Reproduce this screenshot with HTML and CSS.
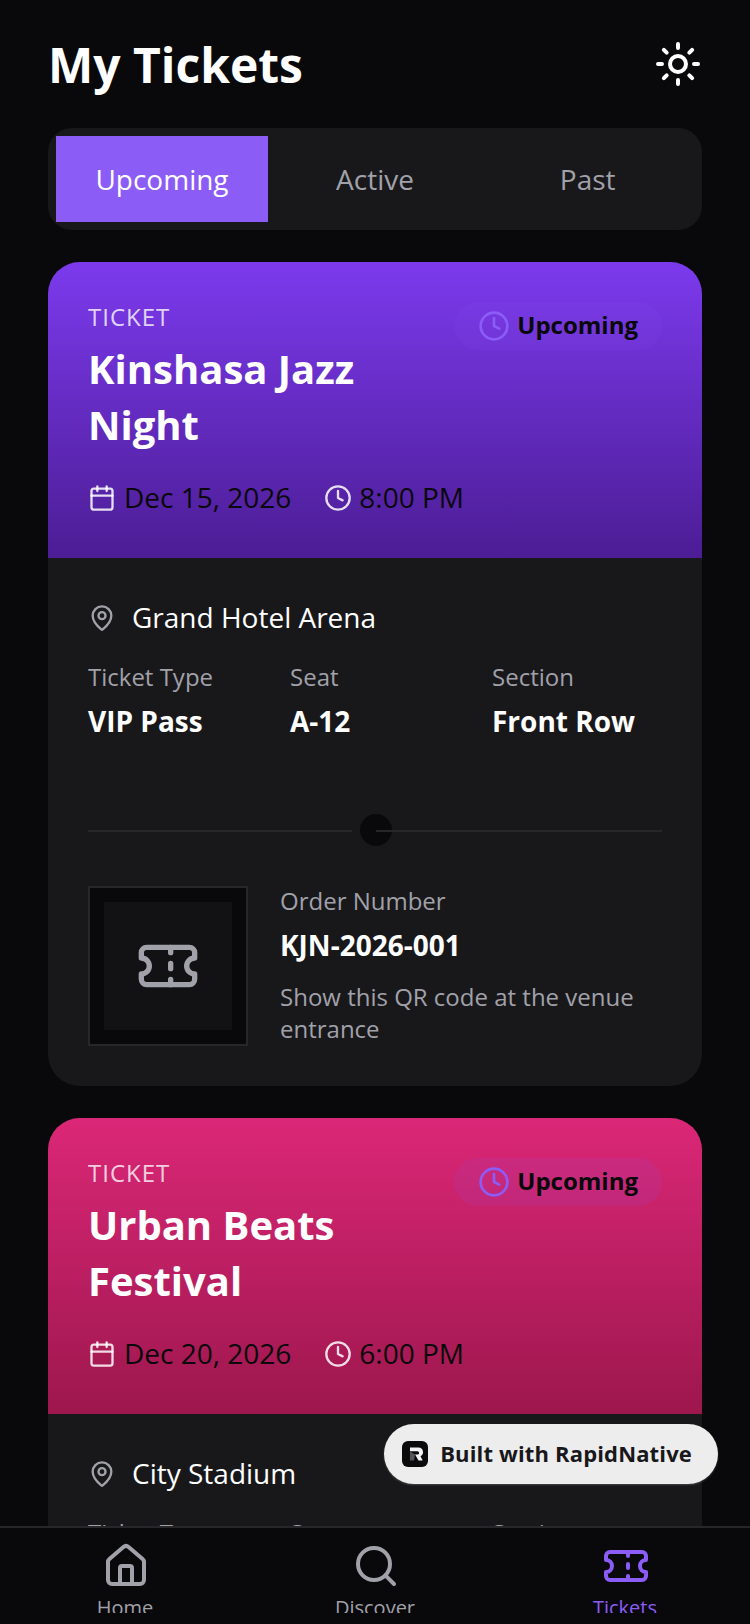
FILE: index.html
```html
<!DOCTYPE html>
<html>
  <head>
    <title>My Tickets</title>
    <link rel="stylesheet" href="styles.css">
  </head>
  <body>
    <svg class="defs" width="0" height="0">
      <symbol id="i-sun" viewBox="0 0 24 24"><circle cx="12" cy="12" r="4"/><path d="M12 2v2M12 20v2M4.93 4.93l1.41 1.41M17.66 17.66l1.41 1.41M2 12h2M20 12h2M6.34 17.66l-1.41 1.41M19.07 4.93l-1.41 1.41"/></symbol>
      <symbol id="i-clock" viewBox="0 0 24 24"><circle cx="12" cy="12" r="10"/><path d="M12 6v6l4 2"/></symbol>
      <symbol id="i-calendar" viewBox="0 0 24 24"><path d="M8 2v4M16 2v4M3 10h18"/><rect x="3" y="4" width="18" height="18" rx="2"/></symbol>
      <symbol id="i-pin" viewBox="0 0 24 24"><path d="M20 10c0 4.993-5.539 10.193-7.399 11.799a1 1 0 0 1-1.202 0C9.539 20.193 4 14.993 4 10a8 8 0 0 1 16 0"/><circle cx="12" cy="10" r="3"/></symbol>
      <symbol id="i-ticket" viewBox="0 0 24 24"><path d="M2 9a3 3 0 0 1 0 6v2a2 2 0 0 0 2 2h16a2 2 0 0 0 2-2v-2a3 3 0 0 1 0-6V7a2 2 0 0 0-2-2H4a2 2 0 0 0-2 2Z"/><path d="M13 5v2M13 17v2M13 11v2"/></symbol>
      <symbol id="i-home" viewBox="0 0 24 24"><path d="M15 21v-8a1 1 0 0 0-1-1h-4a1 1 0 0 0-1 1v8"/><path d="M3 10a2 2 0 0 1 .709-1.528l7-5.999a2 2 0 0 1 2.582 0l7 5.999A2 2 0 0 1 21 10v9a2 2 0 0 1-2 2H5a2 2 0 0 1-2-2z"/></symbol>
      <symbol id="i-search" viewBox="0 0 24 24"><circle cx="11" cy="11" r="8"/><path d="M21 21l-4.3-4.3"/></symbol>
    </svg>

    <div class="screen">
      <div class="content">
        <div class="header">
          <h1 class="page-title">My Tickets</h1>
          <svg class="icon icon-sun"><use href="#i-sun"/></svg>
        </div>

        <div class="tabs">
          <div class="tab tab-active">Upcoming</div>
          <div class="tab">Active</div>
          <div class="tab">Past</div>
        </div>

        <div class="card">
          <div class="card-head head-purple">
            <div class="head-top">
              <div class="head-text">
                <div class="eyebrow">TICKET</div>
                <div class="event-name">Kinshasa Jazz Night</div>
              </div>
              <div class="badge">
                <svg class="icon icon-badge"><use href="#i-clock"/></svg>
                <span>Upcoming</span>
              </div>
            </div>
            <div class="meta">
              <div class="meta-item">
                <svg class="icon icon-meta"><use href="#i-calendar"/></svg>
                <span>Dec 15, 2026</span>
              </div>
              <div class="meta-item">
                <svg class="icon icon-meta"><use href="#i-clock"/></svg>
                <span>8:00 PM</span>
              </div>
            </div>
          </div>
          <div class="card-body">
            <div class="venue">
              <svg class="icon icon-pin"><use href="#i-pin"/></svg>
              <span>Grand Hotel Arena</span>
            </div>
            <div class="details">
              <div>
                <div class="label">Ticket Type</div>
                <div class="value">VIP Pass</div>
              </div>
              <div>
                <div class="label">Seat</div>
                <div class="value">A-12</div>
              </div>
              <div>
                <div class="label">Section</div>
                <div class="value">Front Row</div>
              </div>
            </div>
            <div class="divider">
              <div class="line line-left"></div>
              <div class="hole"></div>
              <div class="line line-right"></div>
            </div>
            <div class="order">
              <div class="qr">
                <div class="qr-inner">
                  <svg class="icon icon-qr"><use href="#i-ticket"/></svg>
                </div>
              </div>
              <div class="order-info">
                <div class="label">Order Number</div>
                <div class="value">KJN-2026-001</div>
                <div class="note">Show this QR code at the venue entrance</div>
              </div>
            </div>
          </div>
        </div>

        <div class="card">
          <div class="card-head head-pink">
            <div class="head-top">
              <div class="head-text">
                <div class="eyebrow">TICKET</div>
                <div class="event-name">Urban Beats Festival</div>
              </div>
              <div class="badge">
                <svg class="icon icon-badge"><use href="#i-clock"/></svg>
                <span>Upcoming</span>
              </div>
            </div>
            <div class="meta">
              <div class="meta-item">
                <svg class="icon icon-meta"><use href="#i-calendar"/></svg>
                <span>Dec 20, 2026</span>
              </div>
              <div class="meta-item">
                <svg class="icon icon-meta"><use href="#i-clock"/></svg>
                <span>6:00 PM</span>
              </div>
            </div>
          </div>
          <div class="card-body">
            <div class="venue">
              <svg class="icon icon-pin"><use href="#i-pin"/></svg>
              <span>City Stadium</span>
            </div>
            <div class="details">
              <div class="label">Ticket Type</div>
              <div class="label">Seat</div>
              <div class="label">Section</div>
            </div>
          </div>
        </div>
      </div>

      <div class="tabbar">
        <div class="tabbar-row">
          <div class="nav-item">
            <svg class="icon icon-nav icon-shift"><use href="#i-home"/></svg>
            <span>Home</span>
          </div>
          <div class="nav-item">
            <svg class="icon icon-nav icon-shift"><use href="#i-search"/></svg>
            <span>Discover</span>
          </div>
          <div class="nav-item nav-active">
            <svg class="icon icon-nav icon-shift"><use href="#i-ticket"/></svg>
            <span>Tickets</span>
          </div>
        </div>
      </div>

      <div class="built">
        <svg class="built-logo" viewBox="0 0 26 26">
          <rect width="26" height="26" rx="6" fill="#0b0b0d"/>
          <path d="M8 6.5h8.5a4.6 4.6 0 0 1 2 8.7l2.2 4.3h-4.2l-3.4-6h2.4a1.5 1.5 0 0 0 0-3.2H8z" fill="#f4f4f5"/>
          <path d="M8 10.5l5 3-1 6H8z" fill="#55555a"/>
        </svg>
        <span>Built with RapidNative</span>
      </div>
    </div>
  </body>
</html>
```

FILE: styles.css
```css
* {
  box-sizing: border-box;
}

body {
  margin: 0;
  background: #09090b;
  font-family: "Open Sans", "Noto Sans", sans-serif;
  color: #fff;
}

.defs {
  position: absolute;
}

.screen {
  position: relative;
  display: flex;
  flex-direction: column;
  width: 750px;
  height: 1624px;
  overflow: hidden;
}

.content {
  flex: 1;
  min-height: 0;
  overflow: hidden;
  padding: 32px 48px 0;
}

.icon {
  display: block;
  flex-shrink: 0;
  fill: none;
  stroke: currentColor;
  stroke-width: 2;
  stroke-linecap: round;
  stroke-linejoin: round;
}

.header {
  display: flex;
  justify-content: space-between;
  align-items: center;
  height: 64px;
}

.page-title {
  margin: 0;
  padding-top: 2px;
  font-size: 48px;
  line-height: 62px;
  font-weight: 700;
}

.icon-sun {
  width: 48px;
  height: 48px;
  color: #fff;
}

.tabs {
  display: flex;
  margin-top: 32px;
  padding: 8px;
  background: #18181b;
  border-radius: 24px;
}

.tab {
  flex: 1;
  height: 86px;
  display: flex;
  align-items: center;
  justify-content: center;
  font-size: 28px;
  color: #a1a1aa;
}

.tab-active {
  flex: none;
  width: 212px;
  margin-right: 0.67px;
  background: #8b5cf6;
  color: #fff;
}

.card {
  margin-top: 32px;
  border-radius: 32px;
  overflow: hidden;
  background: #18181b;
}

.card-head {
  padding: 40px;
}

.head-purple {
  background: linear-gradient(180deg, #7c3aed, #4c1d95);
}

.head-pink {
  background: linear-gradient(180deg, #db2777, #9d174d);
}

.head-top {
  display: flex;
  justify-content: space-between;
  align-items: flex-start;
}

.head-text {
  flex: 1;
  margin-top: -1px;
  padding-right: 32px;
}

.eyebrow {
  font-size: 24px;
  line-height: 32px;
  letter-spacing: 1px;
  color: rgba(255, 255, 255, 0.8);
}

.event-name {
  margin-top: 8px;
  font-size: 40px;
  line-height: 56px;
  font-weight: 700;
}

.badge {
  display: flex;
  align-items: center;
  gap: 7px;
  padding: 8px 24px;
  border-radius: 999px;
  background: rgba(139, 92, 246, 0.1);
  font-size: 24px;
  line-height: 30px;
  font-weight: 700;
  color: #09090b;
}

.badge span {
  padding-bottom: 2px;
}

.icon-badge {
  width: 32px;
  height: 32px;
  color: #8b5cf6;
}

.meta {
  display: flex;
  gap: 33px;
  margin-top: 25px;
}

.meta-item {
  display: flex;
  align-items: center;
  gap: 8px;
  font-size: 28px;
  line-height: 38px;
  color: #09090b;
}

.meta-item span {
  padding-bottom: 2px;
}

.meta-item + .meta-item {
  gap: 7px;
}

.icon-meta {
  width: 28px;
  height: 28px;
  color: rgba(255, 255, 255, 0.85);
}

.card-body {
  padding: 40px;
}

.venue {
  display: flex;
  align-items: center;
  gap: 16px;
  font-size: 28px;
  line-height: 38px;
}

.venue span {
  padding-bottom: 2px;
}

.icon-pin {
  width: 28px;
  height: 28px;
  color: #a1a1aa;
}

.details {
  display: grid;
  grid-template-columns: repeat(3, 202px);
  margin-top: 23px;
}

.label {
  font-size: 24px;
  line-height: 32px;
  color: #a1a1aa;
}

.value {
  margin-top: 8px;
  font-size: 28px;
  line-height: 40px;
  font-weight: 700;
}

.divider {
  display: flex;
  align-items: center;
  margin-top: 73px;
}

.line {
  height: 2px;
  margin-top: 2px;
  background: #27272a;
}

.line-left {
  width: 264px;
}

.line-right {
  flex: 1;
}

.hole {
  width: 32px;
  height: 32px;
  margin: 0 -16px 0 8px;
  border-radius: 50%;
  background: #09090b;
}

.order {
  display: flex;
  gap: 32px;
  margin-top: 40px;
}

.order-info {
  margin-top: -1px;
}

.qr {
  width: 160px;
  height: 160px;
  flex-shrink: 0;
  display: flex;
  align-items: center;
  justify-content: center;
  background: #09090b;
  border: 2px solid #27272a;
}

.qr-inner {
  width: 128px;
  height: 128px;
  display: flex;
  align-items: center;
  justify-content: center;
  background: #121214;
}

.icon-qr {
  width: 64px;
  height: 64px;
  color: #a1a1aa;
}

.note {
  margin-top: 16px;
  font-size: 24px;
  line-height: 32px;
  color: #a1a1aa;
}

.tabbar {
  height: 98px;
  flex-shrink: 0;
  background: #09090b;
  border-top: 2px solid #27272a;
}

.tabbar-row {
  display: flex;
  height: 85px;
  overflow: hidden;
  padding-top: 14px;
}

.nav-item {
  flex: 1;
  display: flex;
  flex-direction: column;
  align-items: center;
  font-size: 20px;
  line-height: 32px;
  color: #a1a1aa;
}

.nav-item span {
  margin-top: 2px;
}

.nav-active {
  color: #8b5cf6;
}

.icon-nav {
  width: 48px;
  height: 48px;
}

.icon-shift {
  transform: translateX(1px);
}

.built {
  position: absolute;
  top: 1424px;
  right: 32px;
  display: flex;
  align-items: center;
  gap: 12px;
  height: 60px;
  padding: 0 26px 0 18px;
  border-radius: 30px;
  background: #ededed;
  box-shadow: 0 1px 2px rgba(255, 255, 255, 0.2);
  font-size: 22px;
  letter-spacing: 0.15px;
  font-weight: 700;
  color: #18181b;
}

.built span {
  padding-bottom: 2px;
}

.built-logo {
  width: 26px;
  height: 26px;
  flex-shrink: 0;
}
```
